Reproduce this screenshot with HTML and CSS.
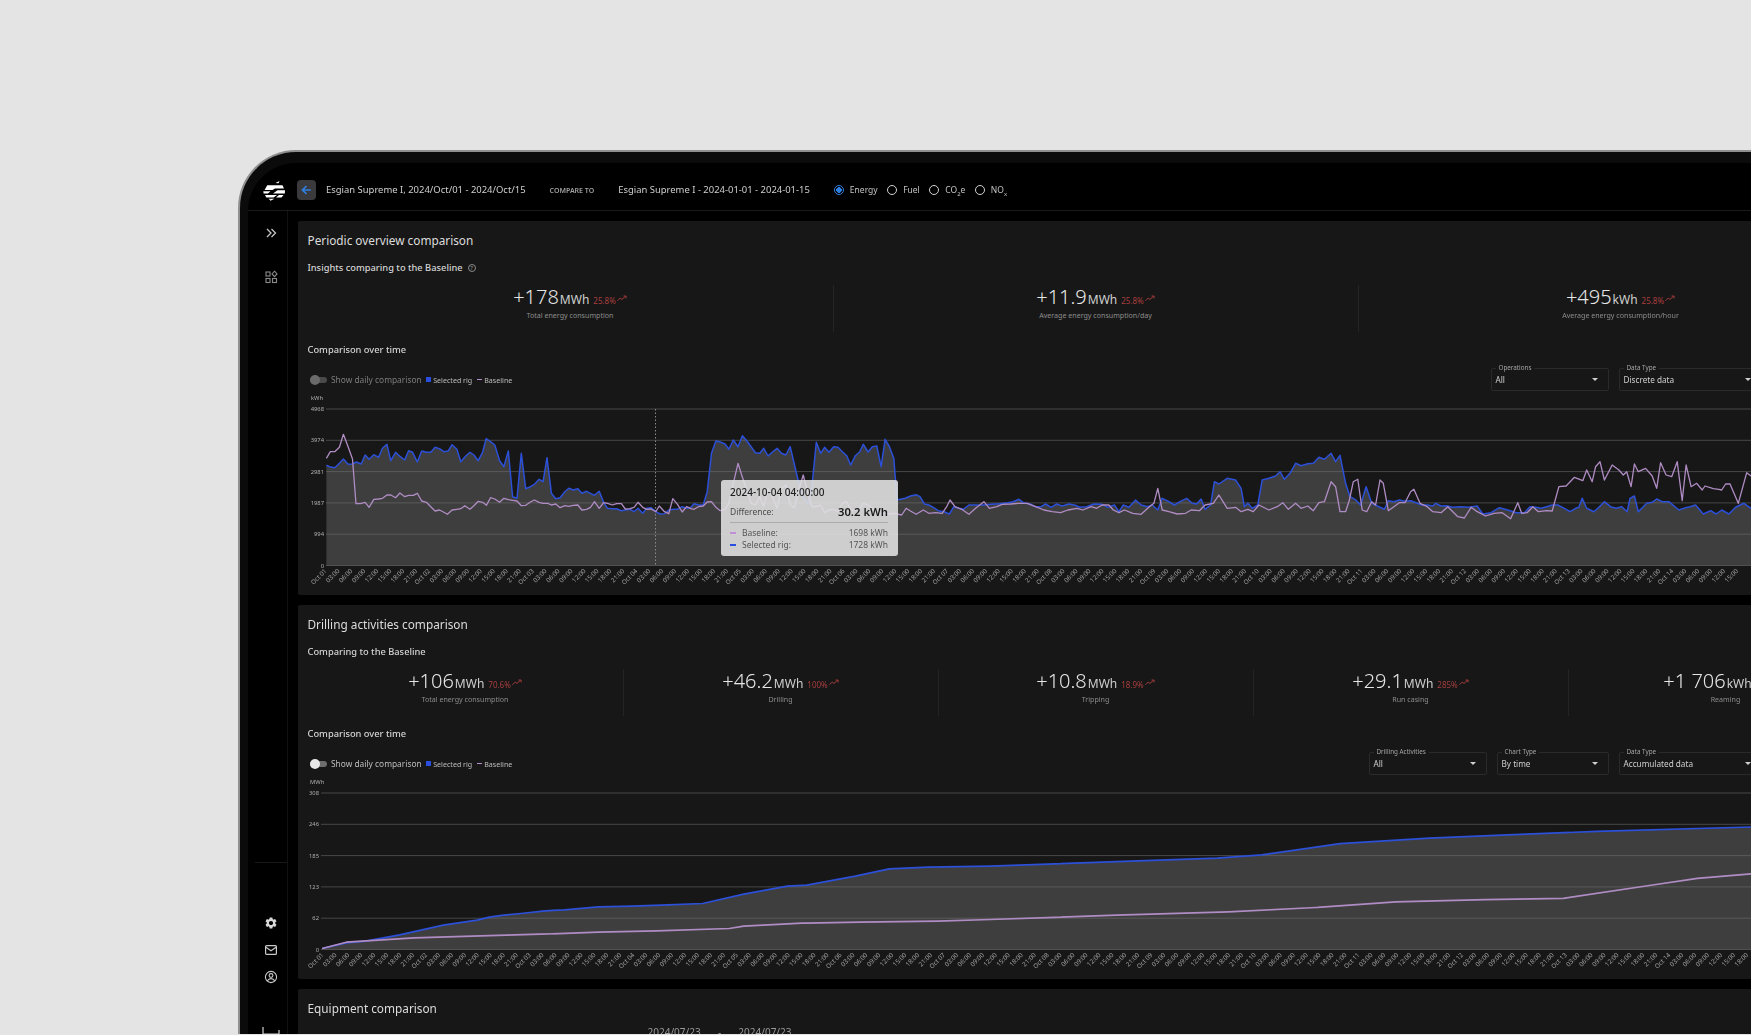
FILE: index.html
```html
<!DOCTYPE html>
<html lang="en">
<head>
<meta charset="utf-8">
<title>Periodic overview comparison</title>
<link rel="stylesheet" href="styles.css">
</head>
<body>
<div class="device">
  <div class="screen">
    <header class="topbar">
      <svg class="logo" viewBox="0 0 22 20" aria-hidden="true"><path d="M12.500 2 16.500 0 15.500 2.300zM4.200 4.200H19.500L21 7.600H12L9.500 9H1.600zM14.500 9.200H22L21.800 12.500H10zM.3 10.200H7.500L5 12.500H.6zM2 14H14L10.500 16.400H3.300zM16 14H20.500L18.500 16.400H13zM5.500 17.800H11.500L7 20 7.500 18.800H6.500z" fill="#fff"/></svg>
      <button class="back" type="button"><svg viewBox="0 0 12 12" aria-hidden="true"><path d="M10 6H2.500M6 2.300 2.300 6 6 9.700" fill="none" stroke="#2f7fe0" stroke-width="1.600"/></svg></button>
      <span class="crumb">Esgian Supreme I, 2024/Oct/01 - 2024/Oct/15</span>
      <span class="compare">COMPARE TO</span>
      <span class="crumb">Esgian Supreme I - 2024-01-01 - 2024-01-15</span>
      <div class="radios">
        <span class="radio radio-on"></span><span class="radio-label">Energy</span>
        <span class="radio"></span><span class="radio-label">Fuel</span>
        <span class="radio"></span><span class="radio-label">CO<sub>2</sub>e</span>
        <span class="radio"></span><span class="radio-label">NO<sub>x</sub></span>
      </div>
    </header>
    <div class="body-row">
      <nav class="sidebar">
        <svg class="nav-icon nav-chevrons" viewBox="0 0 14 14" aria-hidden="true"><path d="M3 3l4 4-4 4M7.500 3l4 4-4 4" fill="none" stroke="#c4c4c4" stroke-width="1.300"/></svg>
        <svg class="nav-icon nav-grid" viewBox="0 0 14 14" aria-hidden="true"><g fill="none" stroke="#8a8a8a" stroke-width="1.100"><rect x="2" y="2" width="4" height="4"/><path d="M10.500 1.200 13 3.900 10.500 6.600 8 3.900z"/><rect x="2" y="8.500" width="4" height="4"/><rect x="8.500" y="8.500" width="4" height="4"/></g></svg>
        <div class="nav-rule"></div>
        <svg class="nav-icon nav-gear" viewBox="0 0 24 24" aria-hidden="true"><path fill="#d8d8d8" d="M19.140 12.940c.04-.3.06-.61.06-.94 0-.32-.02-.64-.07-.94l2.030-1.580c.18-.14.23-.41.12-.61l-1.920-3.320c-.12-.22-.37-.29-.59-.22l-2.390.96c-.5-.38-1.030-.7-1.620-.94l-.36-2.540c-.04-.24-.24-.41-.48-.41h-3.840c-.24 0-.43.17-.47.41l-.36 2.540c-.59.24-1.130.57-1.620.94l-2.390-.96c-.22-.08-.47 0-.59.22L2.740 8.870c-.12.21-.08.47.12.61l2.030 1.580c-.05.3-.09.63-.09.94s.02.64.07.94l-2.030 1.580c-.18.14-.23.41-.12.61l1.920 3.320c.12.22.37.29.59.22l2.390-.96c.5.38 1.030.7 1.620.94l.36 2.540c.05.24.24.41.48.41h3.840c.24 0 .44-.17.47-.41l.36-2.540c.59-.24 1.130-.56 1.620-.94l2.390.96c.22.08.47 0 .59-.22l1.920-3.320c.12-.22.07-.47-.12-.61l-2.010-1.580zM12 15.600c-1.980 0-3.600-1.620-3.600-3.600s1.620-3.600 3.600-3.600 3.600 1.620 3.600 3.600-1.620 3.600-3.600 3.600z"/></svg>
        <svg class="nav-icon nav-next" viewBox="0 0 14 14" aria-hidden="true"><g fill="none" stroke="#c8c8c8" stroke-width="1.200"><rect x="1.600" y="2.600" width="10.800" height="8.800" rx="1"/><path d="M1.600 4 7 7.700 12.400 4"/></g></svg>
        <svg class="nav-icon nav-next" viewBox="0 0 14 14" aria-hidden="true"><g fill="none" stroke="#c8c8c8" stroke-width="1.100"><circle cx="7" cy="7" r="5.600"/><circle cx="7" cy="5.500" r="1.900"/><path d="M3.200 11c1-1.700 2.400-2.400 3.800-2.400s2.800.7 3.800 2.400"/></g></svg>
        <svg class="nav-icon nav-last" viewBox="0 0 18 8" aria-hidden="true"><path d="M1 0v7h16V3" fill="none" stroke="#d0d0d0" stroke-width="1.200"/></svg>
      </nav>
      <main class="content">
        <section class="panel">
          <h2 class="panel-title">Periodic overview comparison</h2>
          <h3 class="subtitle">Insights comparing to the Baseline <span class="help">?</span></h3>
          <div class="kpis kpis-3">
            <div class="kpi"><div class="kpi-line"><span class="kpi-num">+178</span><span class="kpi-unit">MWh</span><span class="kpi-pct">25.8%</span><svg class="trend" viewBox="0 0 11 7" aria-hidden="true"><path d="M.5 6 3.500 3l2 1.500L9.500 1M7.200.8h2.800v2.600" fill="none" stroke="#b03f3f" stroke-width="1"/></svg></div><div class="kpi-label">Total energy consumption</div></div>
            <div class="kpi"><div class="kpi-line"><span class="kpi-num">+11.9</span><span class="kpi-unit">MWh</span><span class="kpi-pct">25.8%</span><svg class="trend" viewBox="0 0 11 7" aria-hidden="true"><path d="M.5 6 3.500 3l2 1.500L9.500 1M7.200.8h2.800v2.600" fill="none" stroke="#b03f3f" stroke-width="1"/></svg></div><div class="kpi-label">Average energy consumption/day</div></div>
            <div class="kpi"><div class="kpi-line"><span class="kpi-num">+495</span><span class="kpi-unit">kWh</span><span class="kpi-pct">25.8%</span><svg class="trend" viewBox="0 0 11 7" aria-hidden="true"><path d="M.5 6 3.500 3l2 1.500L9.500 1M7.200.8h2.800v2.600" fill="none" stroke="#b03f3f" stroke-width="1"/></svg></div><div class="kpi-label">Average energy consumption/hour</div></div>
          </div>
          <h3 class="subtitle over-time">Comparison over time</h3>
          <div class="controls">
            <span class="toggle"></span><span class="toggle-label">Show daily comparison</span>
            <span class="key key-blue"></span><span class="key-label">Selected rig</span>
            <span class="key key-purple"></span><span class="key-label">Baseline</span>
            <div class="selects">
              <div class="select select-118"><span class="select-label">Operations</span>All<span class="caret"></span></div>
              <div class="select select-143"><span class="select-label">Data Type</span>Discrete data<span class="caret"></span></div>
            </div>
          </div>
          <div class="chart-wrap">
            <svg class="chart" id="chart-periodic" width="1593" height="203" aria-label="Energy over time"></svg>
            <div class="tooltip">
              <div class="tip-date">2024-10-04 04:00:00</div>
              <div class="tip-diff"><span>Difference:</span><strong>30.2 kWh</strong></div>
              <div class="tip-row"><span class="tip-key tip-key-purple"></span><span>Baseline:</span><em>1698 kWh</em></div>
              <div class="tip-row"><span class="tip-key tip-key-blue"></span><span>Selected rig:</span><em>1728 kWh</em></div>
            </div>
          </div>
        </section>
        <section class="panel">
          <h2 class="panel-title">Drilling activities comparison</h2>
          <h3 class="subtitle">Comparing to the Baseline</h3>
          <div class="kpis kpis-5">
            <div class="kpi"><div class="kpi-line"><span class="kpi-num">+106</span><span class="kpi-unit">MWh</span><span class="kpi-pct">70.6%</span><svg class="trend" viewBox="0 0 11 7" aria-hidden="true"><path d="M.5 6 3.500 3l2 1.500L9.500 1M7.200.8h2.800v2.600" fill="none" stroke="#b03f3f" stroke-width="1"/></svg></div><div class="kpi-label">Total energy consumption</div></div>
            <div class="kpi"><div class="kpi-line"><span class="kpi-num">+46.2</span><span class="kpi-unit">MWh</span><span class="kpi-pct">100%</span><svg class="trend" viewBox="0 0 11 7" aria-hidden="true"><path d="M.5 6 3.500 3l2 1.500L9.500 1M7.200.8h2.800v2.600" fill="none" stroke="#b03f3f" stroke-width="1"/></svg></div><div class="kpi-label">Drilling</div></div>
            <div class="kpi"><div class="kpi-line"><span class="kpi-num">+10.8</span><span class="kpi-unit">MWh</span><span class="kpi-pct">18.9%</span><svg class="trend" viewBox="0 0 11 7" aria-hidden="true"><path d="M.5 6 3.500 3l2 1.500L9.500 1M7.200.8h2.800v2.600" fill="none" stroke="#b03f3f" stroke-width="1"/></svg></div><div class="kpi-label">Tripping</div></div>
            <div class="kpi"><div class="kpi-line"><span class="kpi-num">+29.1</span><span class="kpi-unit">MWh</span><span class="kpi-pct">285%</span><svg class="trend" viewBox="0 0 11 7" aria-hidden="true"><path d="M.5 6 3.500 3l2 1.500L9.500 1M7.200.8h2.800v2.600" fill="none" stroke="#b03f3f" stroke-width="1"/></svg></div><div class="kpi-label">Run casing</div></div>
            <div class="kpi"><div class="kpi-line kpi-line-offset"><span class="kpi-num">+1 706</span><span class="kpi-unit">kWh</span></div><div class="kpi-label">Reaming</div></div>
          </div>
          <h3 class="subtitle over-time">Comparison over time</h3>
          <div class="controls">
            <span class="toggle toggle-on"></span><span class="toggle-label toggle-label-on">Show daily comparison</span>
            <span class="key key-blue"></span><span class="key-label">Selected rig</span>
            <span class="key key-purple"></span><span class="key-label">Baseline</span>
            <div class="selects">
              <div class="select select-118"><span class="select-label">Drilling Activities</span>All<span class="caret"></span></div>
              <div class="select select-112"><span class="select-label">Chart Type</span>By time<span class="caret"></span></div>
              <div class="select select-143"><span class="select-label">Data Type</span>Accumulated data<span class="caret"></span></div>
            </div>
          </div>
          <div class="chart-wrap">
            <svg class="chart" id="chart-drilling" width="1593" height="203" aria-label="Accumulated energy over time"></svg>
          </div>
        </section>
        <section class="panel panel-last">
          <h2 class="panel-title">Equipment comparison</h2>
          <div class="range">2024/07/23 &nbsp;-&nbsp; 2024/07/23</div>
        </section>
      </main>
    </div>
  </div>
</div>
<script src="script.js"></script>
</body>
</html>
```
FILE: styles.css
```css
* { box-sizing: border-box; }
html, body { margin: 0; height: 100%; overflow: hidden; }
body {
  background: #e4e4e4;
  padding: 150px 0 0 238px;
  font-family: "Noto Sans", "Open Sans", sans-serif;
  color: #d8d8d8;
}
.device {
  width: 1700px;
  height: 884px;
  overflow: hidden;
  background: #0b0b0b;
  border: 2px solid #8f8f8f;
  border-right: 0;
  border-bottom: 0;
  border-top-left-radius: 58px;
  padding: 11px 0 0 8px;
  filter: blur(0.35px);
}
.screen {
  background: #000;
  border-top-left-radius: 48px;
  height: 1000px;
}

/* top bar */
.topbar {
  height: 48px;
  display: flex;
  align-items: center;
  padding: 7px 0 0 15px;
  border-bottom: 1px solid #1a1a1a;
}
.logo { width: 22px; height: 20px; flex: none; margin-top: 1px; }
.back {
  width: 19px;
  height: 20px;
  margin: 0 10px 0 12px;
  padding: 3px;
  border: 0;
  border-radius: 4px;
  background: #3a3a3c;
  display: flex;
}
.back svg { width: 13px; height: 14px; }
.crumb { font-size: 9.450px; color: #cfcfcf; line-height: 14px; white-space: nowrap; }
.compare { font-size: 7px; font-weight: 600; color: #a0a0a0; margin: 0 24px; white-space: nowrap; }
.radios { display: flex; align-items: center; margin-left: 24px; }
.radio {
  width: 10px;
  height: 10px;
  border: 1.500px solid #d4d4d4;
  border-radius: 50%;
  flex: none;
}
.radio-on { border-color: #2f7fe0; background: radial-gradient(circle, #2f7fe0 0 2.600px, transparent 3px); }
.radio-label { font-size: 8.500px; color: #c4c4c4; margin: 0 9.500px 0 6px; line-height: 12px; white-space: nowrap; }
.radio-label sub { font-size: 6px; line-height: 0; }

/* frame */
.body-row { display: flex; }
.sidebar {
  width: 40px;
  flex: none;
  display: flex;
  flex-direction: column;
  align-items: center;
  padding: 15px 0 0 6px;
  border-right: 1px solid #111;
}
.nav-icon { width: 14px; height: 14px; flex: none; }
.nav-grid { margin-top: 30px; }
.nav-rule { width: 32px; height: 1px; background: #171717; margin-top: 578px; }
.nav-gear { margin-top: 53px; }
.nav-next { margin-top: 13px; }
.nav-last { width: 18px; height: 8px; margin-top: 43px; }

.content {
  flex: 1;
  padding: 10px 0 0 10px;
  display: flex;
  flex-direction: column;
  gap: 10px;
}
.panel {
  width: 1593px;
  height: 374px;
  background: #171717;
  border-radius: 2px;
  padding: 9px 9.500px 0;
}
.panel-last { height: 120px; }
.panel-title {
  margin: 0;
  font-size: 11.800px;
  line-height: 20px;
  font-weight: 400;
  color: #dcdcdc;
}
.subtitle {
  margin: 10.500px 0 0;
  font-size: 9.300px;
  line-height: 14px;
  font-weight: 500;
  color: #d4d4d4;
  display: flex;
  align-items: center;
  gap: 5px;
}
.over-time { margin-top: 11px; }
.help {
  width: 8px;
  height: 8px;
  border: 1px solid #8a8a8a;
  border-radius: 50%;
  font-size: 6px;
  line-height: 6px;
  text-align: center;
  color: #a0a0a0;
  font-weight: 400;
}

/* KPIs */
.kpis { display: grid; height: 47px; margin-top: 10.500px; }
.kpis-3 { grid-template-columns: repeat(3, 525px); }
.kpis-5 { grid-template-columns: repeat(5, 315px); }
.kpi { text-align: center; }
.kpi + .kpi { border-left: 1px solid #242424; }
.kpi-line { height: 24px; display: flex; justify-content: center; align-items: baseline; white-space: nowrap; }
.kpi-line-offset { padding-right: 36px; }
.kpi-num { font-size: 20px; line-height: 24px; color: #e6e6e6; font-weight: 300; }
.kpi-unit { font-size: 12px; color: #cfcfcf; margin-left: 1px; }
.kpi-pct { font-size: 8px; color: #a83e3e; margin-left: 4px; }
.trend { width: 10px; height: 7px; margin-left: 1px; align-self: center; margin-top: 3px; }
.kpi-label { font-size: 7.100px; line-height: 12px; color: #8c8c8c; }

/* controls */
.controls { display: flex; align-items: center; height: 23px; margin-top: 11px; padding-left: 2px; }
.toggle {
  width: 17px;
  height: 6px;
  border-radius: 3px;
  background: #4a4a4a;
  position: relative;
  flex: none;
}
.toggle::before {
  content: "";
  position: absolute;
  left: 0;
  top: -2px;
  width: 10px;
  height: 10px;
  border-radius: 50%;
  background: #6a6a6a;
}
.toggle-on { background: #6e6e6e; }
.toggle-on::before { background: #e8e8e8; }
.toggle-label { font-size: 8.400px; color: #7c7c7c; margin: 0 4.500px; white-space: nowrap; }
.toggle-label-on { color: #bdbdbd; }
.key { flex: none; margin-right: 2px; }
.key-blue { width: 5px; height: 5px; background: #2a4fe0; }
.key-purple { width: 5px; height: 1.500px; background: #b48ed0; margin-left: 5px; }
.key-label { font-size: 7.100px; color: #bcbcbc; white-space: nowrap; }
.selects { display: flex; gap: 10px; margin-left: auto; margin-right: 120px; }
.select {
  position: relative;
  height: 23px;
  border: 1px solid #2a2a2a;
  border-radius: 2px;
  font-size: 8.200px;
  line-height: 21px;
  padding-left: 4px;
  color: #cfcfcf;
  white-space: nowrap;
}
.select-118 { width: 118px; }
.select-112 { width: 112px; }
.select-143 { width: 143px; }
.select-label {
  position: absolute;
  left: 4px;
  top: -5px;
  padding: 0 3px;
  background: #171717;
  font-size: 6.300px;
  line-height: 8px;
  color: #a4a4a4;
}
.caret {
  position: absolute;
  right: 10px;
  top: 9px;
  border: 3px solid transparent;
  border-top: 3.500px solid #d0d0d0;
  border-bottom: 0;
}

/* charts */
.chart-wrap { position: relative; margin: 1px 0 0 -9.500px; }
.chart { display: block; }
.grid-line { stroke: rgba(120, 120, 120, 0.5); stroke-width: 1; }
.area { fill: #3e3e3e; }
.line-blue { fill: none; stroke: #2c50d8; stroke-width: 1.500; stroke-linejoin: round; }
.line-purple { fill: none; stroke: #b08cc4; stroke-width: 1.300; stroke-linejoin: round; }
.thick { stroke-width: 1.700; }
.cursor { stroke: #8a8a8a; stroke-width: 1; stroke-dasharray: 1.500 2; }
.axis-text { font-size: 5.800px; fill: #b0b0b0; }
.axis-value { text-anchor: end; }
.tick-text { font-size: 6.300px; fill: #a6a6a6; }
.tooltip {
  position: absolute;
  left: 423px;
  top: 87.500px;
  width: 177px;
  height: 76.500px;
  padding: 5px 10px 0 9px;
  background: rgba(226, 226, 226, 0.88);
  border-radius: 3px;
  color: #555;
  font-size: 8.500px;
}
.tip-date { font-size: 10px; line-height: 14px; font-weight: 500; color: #1e1e1e; }
.tip-diff {
  display: flex;
  justify-content: space-between;
  align-items: center;
  height: 21px;
  margin-top: 3px;
  border-bottom: 1px solid #aaa;
  color: #4c4c4c;
}
.tip-diff strong { font-size: 11.300px; font-weight: 600; color: #1a1a1a; }
.tip-row { display: flex; align-items: center; height: 12px; }
.tip-diff + .tip-row { margin-top: 4px; }
.tip-row em { margin-left: auto; font-style: normal; font-size: 8.500px; color: #555; }
.tip-key { width: 6px; height: 2px; margin-right: 6px; }
.tip-key-purple { background: #c08fd8; }
.tip-key-blue { background: #2a4fe0; }

.range { margin: 7px 0 0 340px; font-size: 10px; color: #999; white-space: nowrap; word-spacing: 6px; }
```
FILE: script.js
```js
var SVG = 'http://www.w3.org/2000/svg';
var LEFT = 298;

function el(parent, name, cls, attrs, text) {
  var n = document.createElementNS(SVG, name);
  if (cls) n.setAttribute('class', cls);
  for (var k in attrs) n.setAttribute(k, attrs[k]);
  if (text) n.textContent = text;
  parent.appendChild(n);
  return n;
}

// traced points: screen x = x0 + px / sx, chart y = px / 3 + dy
function trace(str, x0, sx, dy) {
  return str.trim().split(/\s+/).map(function (p) {
    var a = p.split(',');
    return [x0 + a[0] / sx - LEFT, a[1] / 3 + dy];
  });
}
function pts(list) {
  return list.map(function (p) { return p[0].toFixed(1) + ',' + p[1].toFixed(1); }).join(' ');
}
function pad(n) { return (n < 10 ? '0' : '') + n; }

function draw(cfg) {
  var svg = document.getElementById(cfg.id);
  var plot = cfg.plot, last = 1593;
  el(svg, 'text', 'axis-text', { x: cfg.labelX, y: cfg.unitY }, cfg.unit);

  var base = cfg.zero;
  var b = cfg.blue;
  el(svg, 'polygon', 'area', {
    points: pts(b) + ' ' + b[b.length - 1][0].toFixed(1) + ',' + base + ' ' + b[0][0].toFixed(1) + ',' + base
  });
  cfg.ticks.forEach(function (t, i) {
    var y = base - i * cfg.step;
    el(svg, 'line', 'grid-line', { x1: plot, x2: last, y1: y, y2: y });
    el(svg, 'text', 'axis-text axis-value', { x: plot - 2, y: y + 2 }, t);
  });
  if (cfg.cursor) {
    el(svg, 'line', 'cursor', { x1: cfg.cursor, x2: cfg.cursor, y1: base - 5 * cfg.step, y2: base });
  }
  el(svg, 'polyline', 'line-blue' + (cfg.thick ? ' thick' : ''), { points: pts(b) });
  el(svg, 'polyline', 'line-purple' + (cfg.thick ? ' thick' : ''), { points: pts(cfg.purple) });

  // hourly ticks every 3h, only those that fit in the visible width
  for (var i = 0; i < 116; i++) {
    var x = plot + cfg.tickShift + i * 12.95;
    if (x > 1452) break;
    var y = base + 6;
    var label = i % 8 === 0 ? 'Oct ' + pad(1 + i / 8) : pad((i % 8) * 3) + ':00';
    el(svg, 'text', 'tick-text', {
      x: x, y: y, 'text-anchor': 'end', transform: 'rotate(-45 ' + x + ' ' + y + ')'
    }, label);
  }
}

var A = { x0: 290, sx: 2.529 }, B = { x0: 880, sx: 1.8 };

draw({
  id: 'chart-periodic', plot: 28, tickShift: 1, labelX: 13, unit: 'kWh', unitY: 8, zero: 173.5, step: 31.3,
  ticks: ['0', '994', '1987', '2981', '3974', '4968'], cursor: 357.5,
  blue: trace('92,226 100,230 113,233 125,220 135,207 147,223 158,222 168,216 180,222 190,195 200,208 212,194 224,202 234,175 245,163 255,212 267,187 279,200 290,210 300,182 310,187 322,216 333,183 345,187 356,187 367,172 378,176 389,185 400,183 410,164 422,178 432,215 445,197 455,187 465,195 476,212 487,187 496,146 507,155 518,165 530,212 541,230 552,183 563,320 574,325 585,190 596,296 608,290 618,283 630,268 640,275 650,203 661,310 672,326 683,323 695,305 705,295 716,300 728,296 738,310 750,304 760,310 770,316 782,304 793,337 803,355 815,356 826,356 838,362 848,360 860,358 870,365 880,355 892,370 902,355 913,353 925,365 936,372 947,371 958,360 970,358 980,358 992,350 1003,355 1014,352 1022,341 1033,345 1045,345 1055,305 1066,190 1077,153 1088,156 1100,162 1110,178 1121,150 1133,170 1144,137 1155,152 1166,170 1177,188 1188,190 1198,175 1209,198 1220,186 1232,175 1243,190 1254,195 1265,170 1276,225 1287,280 1298,320 1310,340 1320,290 1331,157 1342,190 1352,172 1363,187 1375,170 1386,172 1397,185 1408,197 1418,225 1430,197 1441,185 1450,163 1462,186 1473,170 1484,168 1495,230 1505,148 1516,170 1527,205 1535,330', A.x0, A.sx, -2)
    .concat(trace('45,325 55,318 65,314 72,320 80,342 88,345 96,352 105,362 115,365 125,372 133,350 142,355 150,358 160,345 172,345 185,345 200,343 215,341 230,338 240,335 250,328 258,338 270,342 280,350 290,350 298,342 308,352 318,342 328,348 340,342 350,345 360,352 372,350 385,342 400,343 410,352 422,345 430,365 438,345 448,352 460,330 470,345 482,350 490,345 500,360 508,325 520,335 530,345 540,335 552,325 562,340 570,342 578,327 585,358 595,345 602,275 610,282 625,265 640,270 650,295 656,350 662,340 670,355 680,345 688,270 700,265 712,258 720,245 728,268 738,250 748,220 758,227 770,221 780,220 790,202 800,208 812,190 820,215 828,196 838,280 846,320 855,328 865,345 875,290 885,340 900,352 908,358 915,332 925,335 935,330 945,334 955,332 965,338 975,345 985,345 995,348 1000,340 1010,348 1020,347 1030,352 1045,350 1060,352 1075,348 1085,372 1100,368 1115,353 1130,360 1145,368 1160,368 1170,350 1180,352 1190,355 1200,350 1210,345 1220,345 1232,355 1242,365 1252,355 1258,352 1264,325 1272,355 1285,365 1295,350 1304,335 1315,350 1325,355 1335,350 1345,365 1350,325 1358,318 1365,365 1380,340 1390,337 1398,327 1408,335 1420,335 1438,360 1450,353 1458,350 1468,345 1482,372 1495,362 1505,372 1515,360 1528,372 1540,352 1555,340 1568,355 1600,350', B.x0, B.sx, -2)),
  purple: trace('92,205 102,185 113,185 125,172 135,133 147,170 158,207 167,341 178,341 190,337 200,352 212,328 224,327 234,325 245,315 255,315 267,323 278,309 290,320 300,316 312,316 322,310 333,333 345,337 356,350 367,363 378,360 389,367 398,373 410,360 422,358 432,356 442,347 455,358 465,347 476,334 487,337 497,346 507,323 518,327 530,337 541,325 552,329 563,331 574,333 585,347 596,346 608,336 618,330 630,337 640,340 652,340 661,345 672,342 683,353 695,347 705,349 716,346 728,345 738,360 750,358 760,352 770,335 782,355 793,338 803,340 815,345 826,341 838,341 848,357 860,356 870,352 880,337 892,352 902,358 913,357 925,365 934,348 947,365 958,371 968,326 980,343 992,366 1003,350 1014,356 1022,358 1033,350 1045,348 1055,336 1066,335 1077,352 1088,362 1100,358 1110,340 1121,280 1133,220 1144,262 1155,300 1166,340 1177,345 1188,320 1198,350 1209,295 1220,320 1232,355 1243,295 1254,285 1265,345 1276,353 1287,300 1298,255 1310,310 1320,350 1331,350 1342,345 1352,368 1363,360 1375,358 1386,365 1397,340 1408,335 1418,360 1430,360 1441,355 1450,340 1462,345 1473,355 1484,368 1495,370 1505,370 1516,372 1527,370 1547,375 1558,355 1568,362', A.x0, A.sx, -2)
    .concat(trace('65,373 78,360 88,370 100,368 112,370 120,350 126,330 135,350 147,358 160,373 172,355 187,335 197,355 210,350 220,343 235,342 250,340 265,340 280,350 295,360 310,365 325,368 338,360 355,355 365,360 380,350 390,355 400,345 412,345 420,360 430,368 440,360 455,370 470,373 485,350 493,340 500,295 508,360 520,365 535,372 550,370 560,360 575,362 585,345 600,340 610,315 625,355 640,352 650,365 662,358 672,365 682,345 700,360 715,350 725,338 735,358 748,340 758,355 770,348 780,362 790,338 800,335 812,275 820,290 828,365 838,365 845,330 852,275 860,268 868,360 876,365 885,335 892,345 900,270 906,280 915,362 925,350 935,338 945,338 955,305 961,298 972,340 985,350 995,365 1010,368 1022,350 1040,380 1052,384 1064,352 1075,365 1090,378 1105,370 1120,368 1135,386 1148,338 1155,370 1165,368 1175,350 1185,365 1200,362 1210,363 1222,290 1235,288 1250,262 1265,272 1272,240 1282,275 1288,230 1296,215 1304,270 1318,225 1330,240 1338,255 1344,245 1352,290 1358,222 1365,245 1378,235 1390,258 1398,295 1405,218 1415,255 1425,260 1435,215 1444,332 1451,225 1460,290 1470,280 1480,300 1485,288 1500,296 1510,298 1515,300 1522,282 1530,282 1545,340 1560,248 1568,258 1600,300', B.x0, B.sx, -2))
});

// second chart: first part traced at 2.063x from x=230, rest from the overview (0.8955x)
var C = { x0: 230, sx: 2.063 };
function far(str) {
  return str.trim().split(/\s+/).map(function (p) {
    var a = p.split(',');
    return [a[0] / 0.8955 - LEFT, a[1] / 0.8955 - 776.5];
  });
}
draw({
  id: 'chart-drilling', plot: 23, tickShift: 3, labelX: 12, unit: 'MWh', unitY: 7.5, zero: 173.5, step: 31.3, thick: true,
  ticks: ['0', '62', '123', '185', '246', '308'],
  blue: trace('190,507 240,490 280,485 350,466 440,437 510,422 535,413 565,407 600,402 650,394 690,391 760,382 830,380 890,377 975,372 1060,344 1150,320 1190,317 1290,290 1360,268 1440,263 1568,260', C.x0, C.sx, 3.5)
    .concat(far('1000,772 1090,769 1130,766 1200,756 1280,751 1350,748 1430,745 1568,741 1600,740')),
  purple: trace('190,507 240,488 380,475 500,470 640,464 760,458 880,454 1030,447 1060,440 1180,431 1300,428 1460,425 1568,420', C.x0, C.sx, 3.5)
    .concat(far('1000,820 1100,817 1180,813 1250,808 1330,806 1400,805 1480,793 1520,787 1568,783 1600,780'))
});
```
